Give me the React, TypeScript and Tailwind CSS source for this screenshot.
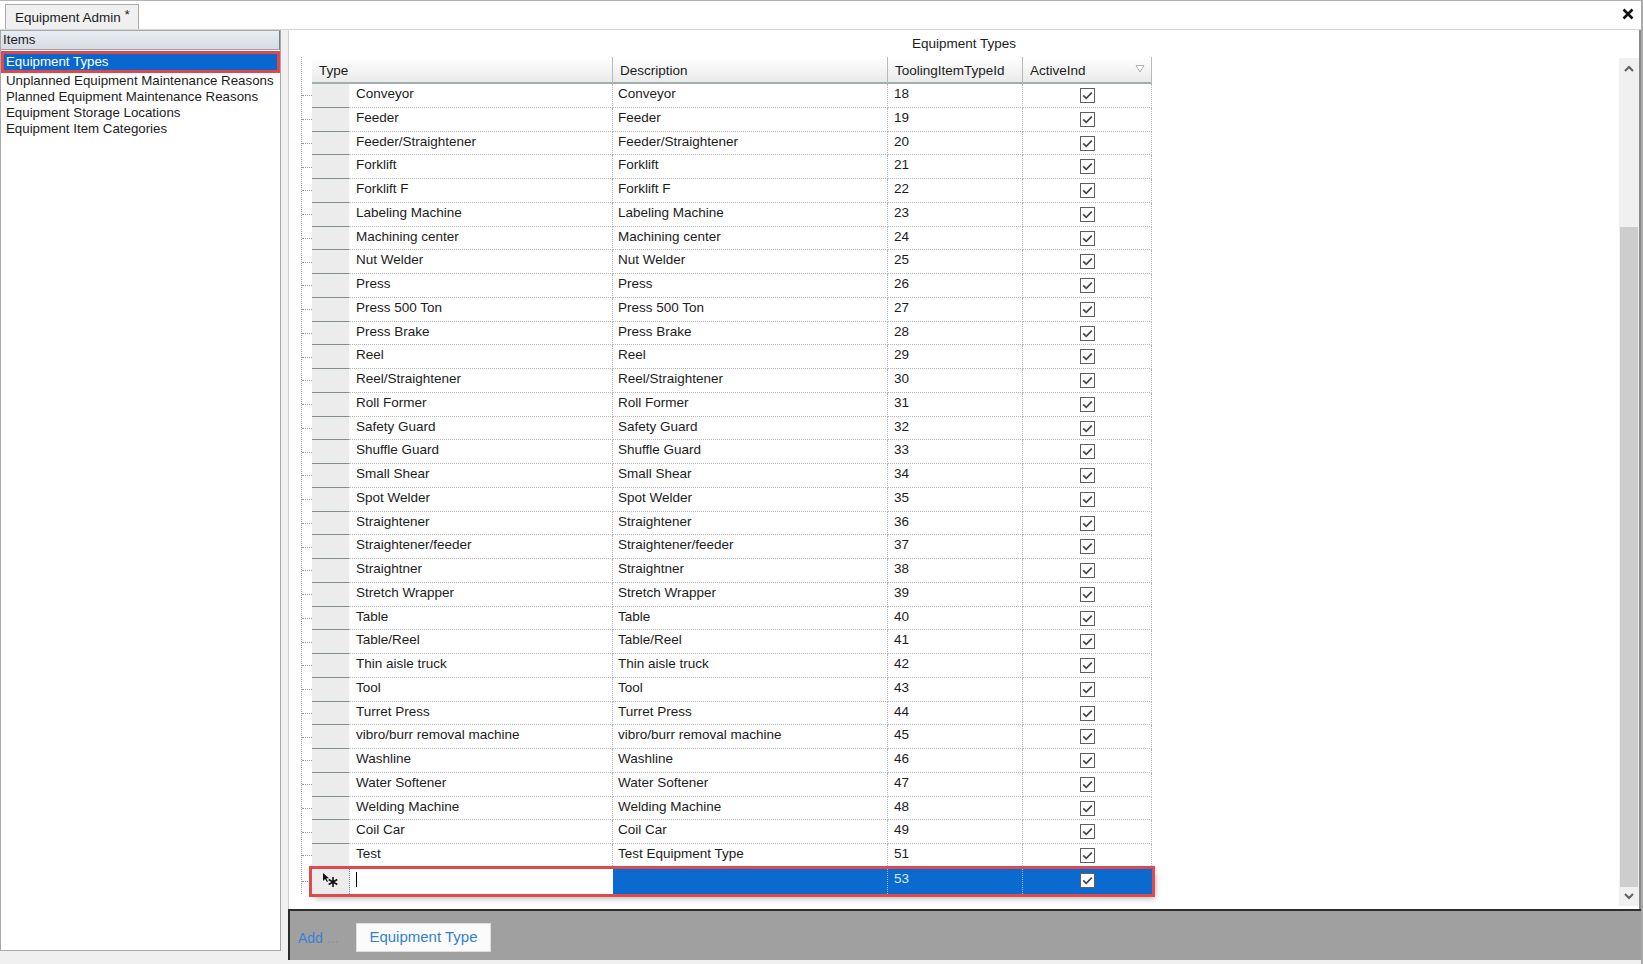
import React from "react";

const rows: [string, string, number][] = [
  ["Conveyor", "Conveyor", 18],
  ["Feeder", "Feeder", 19],
  ["Feeder/Straightener", "Feeder/Straightener", 20],
  ["Forklift", "Forklift", 21],
  ["Forklift F", "Forklift F", 22],
  ["Labeling Machine", "Labeling Machine", 23],
  ["Machining center", "Machining center", 24],
  ["Nut Welder", "Nut Welder", 25],
  ["Press", "Press", 26],
  ["Press 500 Ton", "Press 500 Ton", 27],
  ["Press Brake", "Press Brake", 28],
  ["Reel", "Reel", 29],
  ["Reel/Straightener", "Reel/Straightener", 30],
  ["Roll Former", "Roll Former", 31],
  ["Safety Guard", "Safety Guard", 32],
  ["Shuffle Guard", "Shuffle Guard", 33],
  ["Small Shear", "Small Shear", 34],
  ["Spot Welder", "Spot Welder", 35],
  ["Straightener", "Straightener", 36],
  ["Straightener/feeder", "Straightener/feeder", 37],
  ["Straightner", "Straightner", 38],
  ["Stretch Wrapper", "Stretch Wrapper", 39],
  ["Table", "Table", 40],
  ["Table/Reel", "Table/Reel", 41],
  ["Thin aisle truck", "Thin aisle truck", 42],
  ["Tool", "Tool", 43],
  ["Turret Press", "Turret Press", 44],
  ["vibro/burr removal machine", "vibro/burr removal machine", 45],
  ["Washline", "Washline", 46],
  ["Water Softener", "Water Softener", 47],
  ["Welding Machine", "Welding Machine", 48],
  ["Coil Car", "Coil Car", 49],
  ["Test", "Test Equipment Type", 51],
];

const items = [
  "Unplanned Equipment Maintenance Reasons",
  "Planned Equipment Maintenance Reasons",
  "Equipment Storage Locations",
  "Equipment Item Categories",
];

function Check() {
  return (
    <svg width="15" height="15" viewBox="0 0 15 15">
      <rect x="0.5" y="0.5" width="14" height="14" fill="#fff" stroke="#5f5f5f" />
      <polyline points="3.2,7.4 6.2,10.4 11.8,4.6" fill="none" stroke="#444" strokeWidth="1.6" />
    </svg>
  );
}

function Stub() {
  return (
    <div className="w-[10px] flex items-center">
      <div className="w-full h-0 border-t border-dotted border-[#9a9a9a]" />
    </div>
  );
}

function Row({ type, desc, id }: { type: string; desc: string; id: number }) {
  return (
    <div className="flex h-[23.75px]">
      <Stub />
      <div className="w-[38px] bg-[#ececec] border-b border-b-[#82908f] border-r border-r-[#fafafa]" />
      <div className="w-[263px] pl-[6px] pt-[1px] leading-[18px] border-b border-r border-dotted border-[#b8b8b8]">{type}</div>
      <div className="w-[275px] pl-[5px] pt-[1px] leading-[18px] border-b border-r border-dotted border-[#b8b8b8]">{desc}</div>
      <div className="w-[135px] pl-[6px] pt-[1px] leading-[18px] border-b border-r border-dotted border-[#b8b8b8]">{id}</div>
      <div className="w-[129px] flex justify-center pt-[4px] border-b border-r border-dotted border-[#b8b8b8]">
        <Check />
      </div>
    </div>
  );
}

export default function App() {
  return (
    <div className="w-[1643px] h-[964px] flex flex-col bg-white text-[#1c1c1c] overflow-hidden border-r-2 border-[#a9a9a9]" style={{ fontFamily: '"Liberation Sans", Arial, sans-serif' }}>
      {/* top tab strip */}
      <div className="h-[30px] flex items-end justify-between pl-[5px] pr-[6px] border-t border-t-[#b5b5b5] border-b border-b-[#d6d6d6]">
        <div className="h-[25px] w-[134px] bg-[#f0f0f0] border border-b-0 border-[#aaaaaa] pl-[9px] pt-[4px] text-[13.5px] leading-[18px]">
          Equipment Admin <span className="relative -top-[3px]">*</span>
        </div>
        <svg width="12" height="12" viewBox="0 0 12 12" className="mb-[9px] mr-[1px]">
          <path d="M1.5 1.5 L10.5 10.5 M10.5 1.5 L1.5 10.5" stroke="#111" strokeWidth="2.6" />
        </svg>
      </div>

      <div className="flex flex-1 bg-[#f0f0f0]">
        {/* left items panel */}
        <div className="w-[281px] h-[921px] bg-white border border-[#a8a8a8] flex flex-col text-[13.3px]">
          <div className="h-[19px] bg-gradient-to-b from-[#e9edf3] to-[#d6dce4] border-b border-[#9ea4ab] border-r border-r-[#7d7d7d] pl-[2px] leading-[18px]">
            Items
          </div>
          <div className="h-[22px] mt-[1px] mx-0 border-[3px] border-[#e0464b]">
            <div className="h-full bg-[#0a67cd] text-white pl-[2px] leading-[16px]">Equipment Types</div>
          </div>
          {items.map((t) => (
            <div key={t} className="h-[16px] pl-[5px] leading-[16px] whitespace-nowrap">
              {t}
            </div>
          ))}
        </div>

        <div className="w-[7px]" />

        {/* right area */}
        <div className="w-[1353px] flex flex-col">
          <div className="h-[879px] bg-white border-l border-[#cfcfcf] flex">
            <div className="flex-1 flex flex-col text-[13.5px]">
              <div className="h-[27px] text-center pl-[20px] pt-[6px] leading-[16px]">Equipment Types</div>
              <div className="pl-[12px]">
                <div className="border-l border-dotted border-[#9a9a9a] w-[851px]">
                  {/* header */}
                  <div className="flex h-[27px]">
                    <div className="w-[10px]" />
                    <div className="w-[301px] pl-[7px] pt-[3px] flex items-center bg-gradient-to-b from-[#ffffff] to-[#eaeaea] border-b-2 border-b-[#9fb0ae] border-r border-r-[#b9b9b9]">Type</div>
                    <div className="w-[275px] pl-[7px] pt-[3px] flex items-center bg-gradient-to-b from-[#ffffff] to-[#eaeaea] border-b-2 border-b-[#9fb0ae] border-r border-r-[#b9b9b9]">Description</div>
                    <div className="w-[135px] pl-[7px] pt-[3px] flex items-center bg-gradient-to-b from-[#ffffff] to-[#eaeaea] border-b-2 border-b-[#9fb0ae] border-r border-r-[#b9b9b9]">ToolingItemTypeId</div>
                    <div className="w-[129px] pl-[7px] pr-[6px] pt-[3px] flex items-center justify-between bg-gradient-to-b from-[#ffffff] to-[#eaeaea] border-b-2 border-b-[#9fb0ae] border-r border-r-[#b9b9b9]">
                      <span>ActiveInd</span>
                      <svg width="10" height="9" viewBox="0 0 10 9" className="-mt-[6px]">
                        <path d="M1 1.5 H9 L5 8 Z" fill="#fff" stroke="#b0b0b0" />
                      </svg>
                    </div>
                  </div>
                  {rows.map(([t, d, id]) => (
                    <Row key={id} type={t} desc={d} id={id} />
                  ))}
                  {/* new row */}
                  <div className="flex h-[25px] mt-[1px]">
                    <Stub />
                    <div className="flex shadow-[0_0_0_3px_#e04a4f,3px_4px_6px_rgba(0,0,0,0.35)]">
                      <div className="w-[38px] bg-[#ececec] border-r border-dotted border-[#6a86b0] relative flex items-center justify-center">
                        <svg width="20" height="18" viewBox="0 0 20 18">
                          <path d="M2 1 L2 9 L4 7 L6 10 L7 9.4 L5.2 6.5 L8 6.3 Z" fill="#111" />
                          <path d="M12 5 V15 M7.7 7.5 L16.3 12.5 M16.3 7.5 L7.7 12.5" stroke="#111" strokeWidth="1.6" />
                        </svg>
                      </div>
                      <div className="w-[263px] pl-[6px] bg-white flex items-start pt-[3px]">
                        <div className="w-[1px] h-[15px] bg-black" />
                      </div>
                      <div className="w-[275px] bg-[#0a6ad0] border-r border-dotted border-[#9cc1ea]" />
                      <div className="w-[135px] bg-[#0a6ad0] pl-[6px] pt-[1px] leading-[18px] text-[#dbe9fb] border-r border-dotted border-[#9cc1ea]">53</div>
                      <div className="w-[129px] bg-[#0a6ad0] flex justify-center pt-[4px]">
                        <Check />
                      </div>
                    </div>
                  </div>
                </div>
              </div>
            </div>
            {/* scrollbar */}
            <div className="w-[20px] mt-[28px] mb-[3px] bg-[#f0f0f0] flex flex-col">
              <div className="h-[20px] flex items-center justify-center">
                <svg width="10" height="7" viewBox="0 0 10 7">
                  <path d="M1 6 L5 2 L9 6" fill="none" stroke="#606060" strokeWidth="2" />
                </svg>
              </div>
              <div className="h-[149px]" />
              <div className="flex-1 bg-[#cdcdcd] mx-[1px]" />
              <div className="h-[19px] flex items-center justify-center">
                <svg width="10" height="7" viewBox="0 0 10 7">
                  <path d="M1 1 L5 5 L9 1" fill="none" stroke="#606060" strokeWidth="2" />
                </svg>
              </div>
            </div>
            <div className="w-[2px] bg-[#8a8a8a]" />
          </div>

          {/* bottom bar */}
          <div className="h-[51px] bg-[#a0a0a0] border-t-2 border-l-2 border-[#2d2d2d] flex items-center pl-[8px] pb-[1px]">
            <span className="w-[58px] text-[14px] text-[#3a7fd5] mt-[6px] whitespace-nowrap">
              Add <span className="text-[#6f93c6]">...</span>
            </span>
            <div className="w-[135px] h-[29px] mt-[4px] bg-[#fbfbfb] border border-[#dedede] flex items-center justify-center text-[15px] text-[#357fd6]">
              Equipment Type
            </div>
          </div>
        </div>
      </div>
    </div>
  );
}
